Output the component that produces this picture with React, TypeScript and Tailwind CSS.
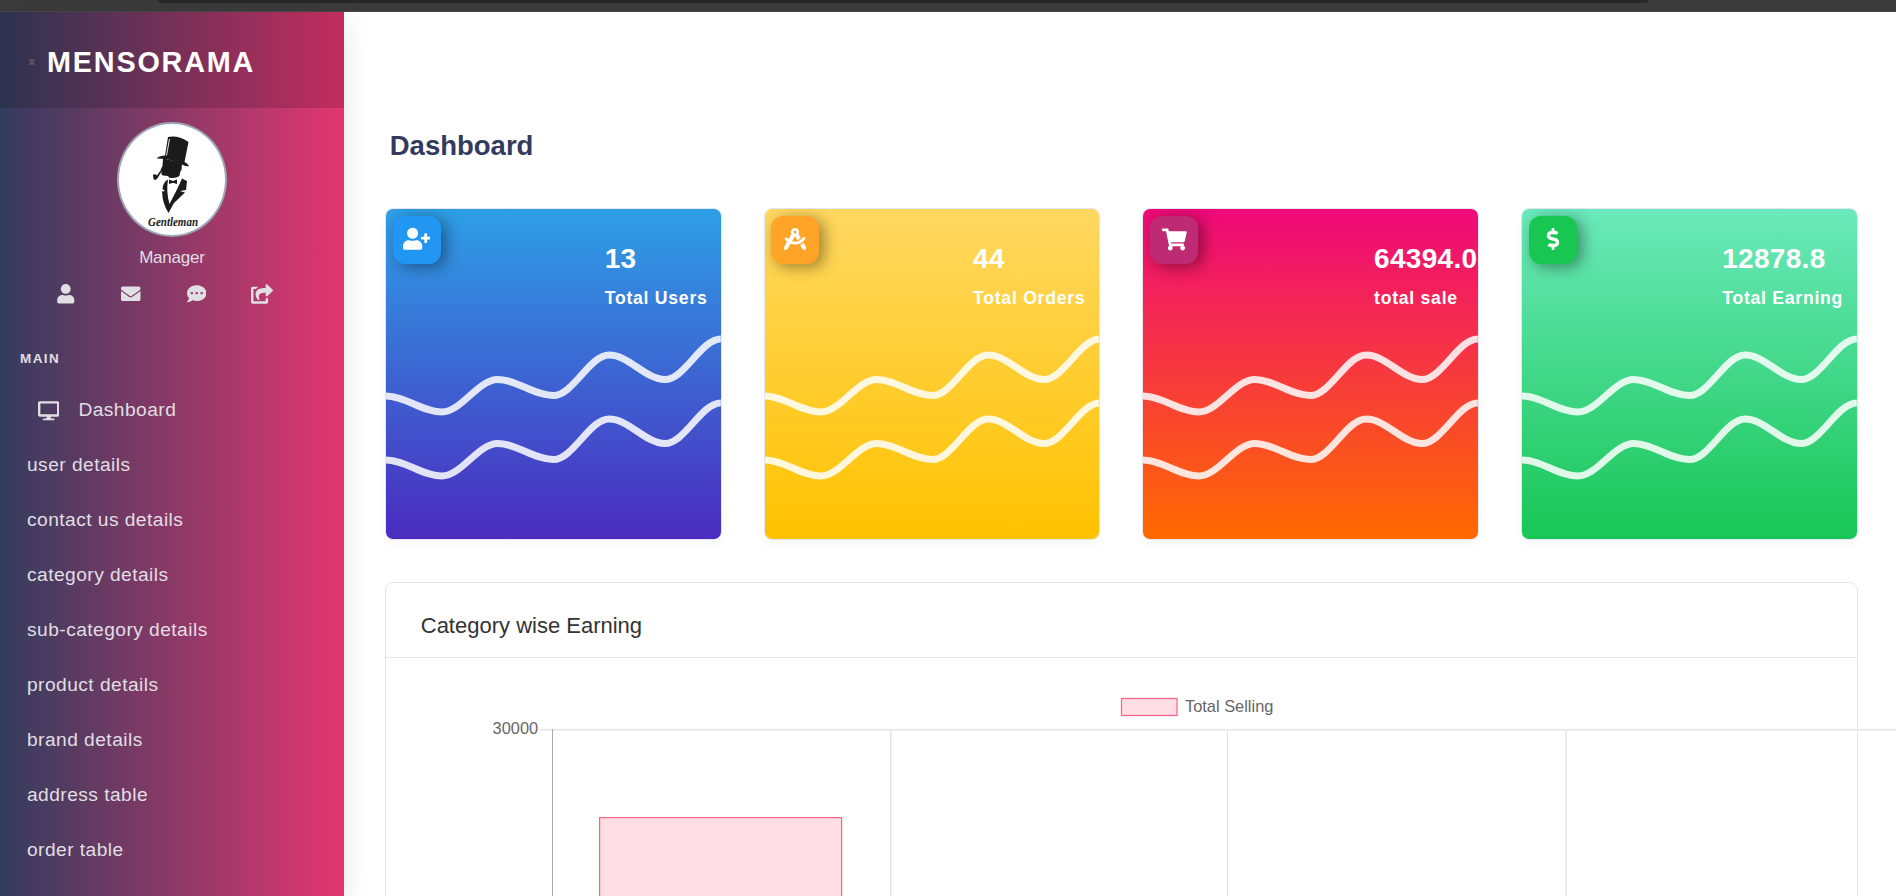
import React from 'react';
import type { IconType } from 'react-icons';
import {
  FaUser,
  FaEnvelope,
  FaCommentDots,
  FaShareSquare,
  FaDesktop,
  FaUserPlus,
  FaDraftingCompass,
  FaShoppingCart,
  FaDollarSign,
} from 'react-icons/fa';

const menu = [
  'user details',
  'contact us details',
  'category details',
  'sub-category details',
  'product details',
  'brand details',
  'address table',
  'order table',
];

const shortcuts: { icon: IconType; size: string }[] = [
  { icon: FaUser, size: 'h-[19.5px] w-[19.5px]' },
  { icon: FaEnvelope, size: 'h-[19.5px] w-[19.5px]' },
  { icon: FaCommentDots, size: 'h-[19.5px] w-[19.5px]' },
  { icon: FaShareSquare, size: 'h-[22px] w-[22px]' },
];

type Stat = {
  value: string;
  label: string;
  icon: IconType;
  iconSize: string;
  card: string;
  badge: string;
  indent: string;
};

const stats: Stat[] = [
  { value: '13', label: 'Total Users', icon: FaUserPlus, iconSize: 'h-[27.5px] w-[27.5px]', card: 'from-[#2e9fe6] to-[#4b2bbf]', badge: 'bg-[#2196f3]', indent: 'pl-[219px]' },
  { value: '44', label: 'Total Orders', icon: FaDraftingCompass, iconSize: 'h-[22px] w-[22px]', card: 'from-[#ffd861] to-[#ffc200]', badge: 'bg-[#ffa426]', indent: 'pl-[208.5px]' },
  { value: '64394.0', label: 'total sale', icon: FaShoppingCart, iconSize: 'h-[24.75px] w-[24.75px]', card: 'from-[#ee0979] to-[#ff6a00]', badge: 'bg-[#be2a74]', indent: 'pl-[230.7px]' },
  { value: '12878.8', label: 'Total Earning', icon: FaDollarSign, iconSize: 'h-[22px] w-[22px]', card: 'from-[#6be9bb] to-[#18c656]', badge: 'bg-[#18c752]', indent: 'pl-[200px]' },
];

const wavePoints = [187, 203, 170.5, 186.5, 146, 170.5, 130];

function wavePath(shift: number) {
  const step = 335 / 6;
  return wavePoints
    .map((y, i) => {
      const x = i * step;
      if (i === 0) return `M0 ${y + shift}`;
      const handle = step * 0.35;
      return `C${x - step + handle} ${wavePoints[i - 1] + shift} ${x - handle} ${y + shift} ${x} ${y + shift}`;
    })
    .join(' ');
}

function Gentleman() {
  return (
    <svg viewBox="0 0 106 111" className="h-[111px] w-[106px]">
      <g fill="#1b1b1b">
        <path d="M49 13 Q59 11 69.5 18 L65.5 38 Q69 39.5 70 42 Q67 43 63 40.5 Q50 34 38 34.5 Q38 32.5 46 31.5 Z" />
        <path d="M44 34.5 Q54 36 63 40 L62.5 46 Q61 47 60.5 52 Q56 55 50 53.5 L49 52 L44 51.5 Q42 51 42.5 48 L41.5 46 L43.5 42 Z" />
        <path d="M34 51 Q35.5 49.5 38 51.5 L41.5 46.5 L42.5 47.5 L39 53.5 Q36.5 57.5 34.5 55 Z" />
        <path d="M50 55.5 L54 57 L58 55.5 L58 60 L54 58.8 L50 60 Z" />
        <path d="M49 55.5 Q44 58 43.5 65 L46 67 L43 67.5 Q43.5 80 49.5 89 L55 79 L66 68.5 L61 67 L67 66 L68 57 L63 54.5 Q58 66 50.5 80 Q47 68 49 55.5 Z" />
      </g>
      <path d="M50.5 15 L47.5 31.5" stroke="#fff" strokeWidth="0.9" fill="none" />
      <text
        x="29"
        y="101.5"
        textLength="50"
        lengthAdjust="spacingAndGlyphs"
        fill="#1b1b1b"
        className="font-['Liberation_Serif',serif] text-[12px] font-bold italic"
      >
        Gentleman
      </text>
    </svg>
  );
}

function Sidebar() {
  return (
    <aside className="z-10 w-[344px] shrink-0 bg-linear-to-r/srgb from-[#333c5e] to-[#e3366f] text-[#e0dfe3] shadow-[0_8px_30px_rgba(0,0,0,0.1)]">
      <div className="flex h-24 items-center bg-black/15 pt-1 pl-[29px]">
        <svg viewBox="0 0 6 6" className="mr-3 h-1.5 w-1.5">
          <path d="M0 1h6M0 5h6M1 3h4M2 0v6M4 0v6" stroke="#6b6268" strokeWidth="0.8" />
        </svg>
        <span className="text-[28.8px] leading-8 font-bold tracking-[1.8px] text-white">MENSORAMA</span>
      </div>
      <div className="flex flex-col items-center pt-3.5">
        <div className="flex h-[115px] w-[110px] items-center justify-center overflow-hidden rounded-[50%] border-2 border-[#9ba7b4] bg-white">
          <Gentleman />
        </div>
        <div className="mt-[9px] text-[17px] leading-6 tracking-[-0.2px]">Manager</div>
      </div>
      <div className="mt-[13px] flex pl-[33px]">
        {shortcuts.map(({ icon: Icon, size }, i) => (
          <div key={i} className="flex h-[22px] w-[65.4px] items-center justify-center">
            <Icon className={size} />
          </div>
        ))}
      </div>
      <div className="mt-11 pl-5 text-[13.5px] leading-5 font-bold tracking-[1.4px]">MAIN</div>
      <nav className="mt-[14px] text-[19.2px] tracking-[0.45px]">
        <div className="flex h-[55px] items-center pl-[38px]">
          <FaDesktop className="h-[21.4px] w-[21.4px]" />
          <span className="ml-[19px]">Dashboard</span>
        </div>
        {menu.map((item) => (
          <div key={item} className="flex h-[55px] items-center pl-[27px]">
            {item}
          </div>
        ))}
      </nav>
    </aside>
  );
}

function StatCard({ stat }: { stat: Stat }) {
  const Icon = stat.icon;
  return (
    <div className="h-[332px] rounded-lg border border-[#e3e6f0] shadow-[0_5px_10px_rgba(0,0,0,0.03)]">
      <div className={`relative h-full overflow-hidden rounded-[7px] ${stat.card} bg-linear-to-b/srgb`}>
        <svg viewBox="0 0 335 330" preserveAspectRatio="none" className="absolute inset-0 h-full w-full">
          <g fill="none" stroke="#fff" strokeOpacity="0.85" strokeWidth="7">
            <path d={wavePath(0)} />
            <path d={wavePath(64)} />
          </g>
        </svg>
        <div className={`absolute top-[7px] left-[6.8px] flex h-12 w-12 items-center justify-center rounded-xl pb-0.5 shadow-[5px_3px_15px_rgba(0,0,0,0.4)] ${stat.badge}`}>
          <Icon className={`shrink-0 text-white ${stat.iconSize}`} />
        </div>
        <div className={`relative pt-[34px] font-bold whitespace-nowrap text-white ${stat.indent}`}>
          <div className="text-[28px] leading-8 tracking-[0.3px]">{stat.value}</div>
          <div className="mt-[13px] text-[17.6px] leading-5 tracking-[0.75px]">{stat.label}</div>
        </div>
      </div>
    </div>
  );
}

function EarningChart() {
  return (
    <svg viewBox="0 0 1510 238" className="h-[238px] w-[1510px] shrink-0">
      <rect x="735.5" y="40.5" width="55.5" height="17" fill="#ffdfe5" stroke="#ff6384" strokeWidth="1.25" />
      <g fill="#666" className="font-['Liberation_Sans',Arial,sans-serif] text-[16.4px]">
        <text x="799" y="54">Total Selling</text>
        <text x="152.2" y="76" textAnchor="end">30000</text>
      </g>
      <rect x="153" y="71" width="1357" height="1" fill="#e4e4e4" />
      <rect x="153" y="72" width="1357" height="1" fill="#f2f2f2" />
      <rect x="166" y="71" width="1" height="167" fill="#a9a9a9" />
      <rect x="504" y="71" width="1.5" height="167" fill="#e4e4e4" />
      <rect x="841" y="71" width="1" height="167" fill="#e4e4e4" />
      <rect x="1179" y="71" width="2" height="167" fill="#ebebeb" />
      <rect x="213.6" y="159.6" width="242" height="90" fill="#ffdfe5" stroke="#ff6384" strokeWidth="1.25" />
    </svg>
  );
}

export default function App() {
  return (
    <div className="flex h-[896px] w-[1896px] flex-col overflow-hidden bg-white font-['Liberation_Sans',Arial,sans-serif]">
      <div className="flex h-3 shrink-0 border-b border-[#484848] bg-[#3b3b3b] pl-[158px]">
        <div className="h-[3px] w-[1490px] rounded-b-lg bg-[#272727]" />
      </div>
      <div className="flex min-h-0 flex-1">
        <Sidebar />
        <main className="min-w-0 flex-1 overflow-hidden pr-[38px] pl-[40.75px]">
          <h1 className="mt-[116px] ml-[5px] text-[27.5px] leading-9 font-bold text-[#34395e]">Dashboard</h1>
          <div className="mt-[44px] grid grid-cols-4 gap-[42px]">
            {stats.map((stat) => (
              <StatCard key={stat.label} stat={stat} />
            ))}
          </div>
          <section className="mt-[42px] h-[400px] rounded-lg border border-[#e4e6f0]">
            <h2 className="flex h-[75px] items-center border-b border-[#e4e6ea] pt-[11px] pl-[35px] text-[22px] text-[#333]">
              Category wise Earning
            </h2>
            <EarningChart />
          </section>
        </main>
      </div>
    </div>
  );
}
